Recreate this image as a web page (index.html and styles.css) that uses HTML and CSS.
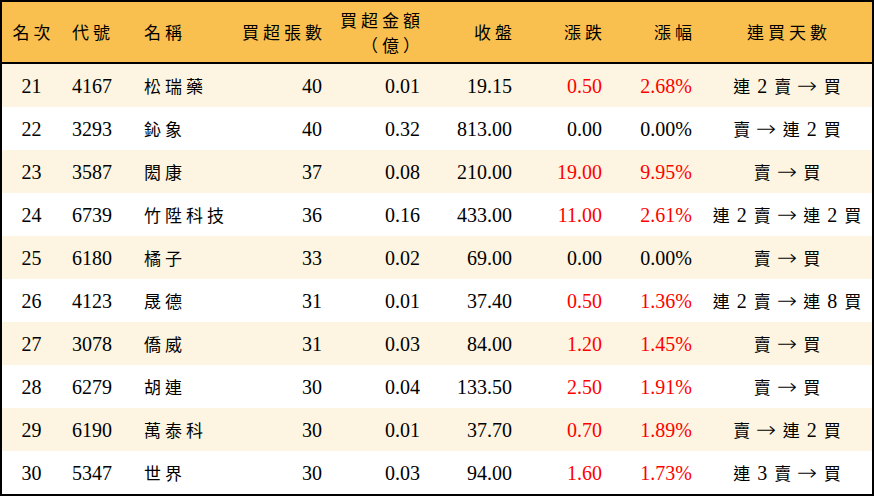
FILE: index.html
```html
<!DOCTYPE html>
<html lang="zh-Hant">
<head>
<meta charset="utf-8">
<link rel="stylesheet" href="styles.css">
</head>
<body>
<div class="board">
  <div class="row head">
    <div class="cell center"><span class="c">名次</span></div>
    <div class="cell left"><span class="c">代號</span></div>
    <div class="cell left2"><span class="c">名稱</span></div>
    <div class="cell right"><span class="c">買超張數</span></div>
    <div class="cell right two"><span class="c">買超金額</span><span class="c paren">（億）</span></div>
    <div class="cell right"><span class="c">收盤</span></div>
    <div class="cell right"><span class="c">漲跌</span></div>
    <div class="cell right"><span class="c">漲幅</span></div>
    <div class="cell center"><span class="c">連買天數</span></div>
  </div>

  <div class="row odd">
    <div class="cell center">21</div><div class="cell left">4167</div><div class="cell left2"><span class="c">松瑞藥</span></div>
    <div class="cell right">40</div><div class="cell right">0.01</div><div class="cell right">19.15</div>
    <div class="cell right up">0.50</div><div class="cell right up">2.68%</div>
    <div class="cell center days"><span class="k">連</span> 2 <span class="k">賣</span> <span class="ar">→</span> <span class="k">買</span></div>
  </div>
  <div class="row">
    <div class="cell center">22</div><div class="cell left">3293</div><div class="cell left2"><span class="c">鈊象</span></div>
    <div class="cell right">40</div><div class="cell right">0.32</div><div class="cell right">813.00</div>
    <div class="cell right">0.00</div><div class="cell right">0.00%</div>
    <div class="cell center days"><span class="k">賣</span> <span class="ar">→</span> <span class="k">連</span> 2 <span class="k">買</span></div>
  </div>
  <div class="row odd">
    <div class="cell center">23</div><div class="cell left">3587</div><div class="cell left2"><span class="c">閎康</span></div>
    <div class="cell right">37</div><div class="cell right">0.08</div><div class="cell right">210.00</div>
    <div class="cell right up">19.00</div><div class="cell right up">9.95%</div>
    <div class="cell center days"><span class="k">賣</span> <span class="ar">→</span> <span class="k">買</span></div>
  </div>
  <div class="row">
    <div class="cell center">24</div><div class="cell left">6739</div><div class="cell left2"><span class="c">竹陞科技</span></div>
    <div class="cell right">36</div><div class="cell right">0.16</div><div class="cell right">433.00</div>
    <div class="cell right up">11.00</div><div class="cell right up">2.61%</div>
    <div class="cell center days"><span class="k">連</span> 2 <span class="k">賣</span> <span class="ar">→</span> <span class="k">連</span> 2 <span class="k">買</span></div>
  </div>
  <div class="row odd">
    <div class="cell center">25</div><div class="cell left">6180</div><div class="cell left2"><span class="c">橘子</span></div>
    <div class="cell right">33</div><div class="cell right">0.02</div><div class="cell right">69.00</div>
    <div class="cell right">0.00</div><div class="cell right">0.00%</div>
    <div class="cell center days"><span class="k">賣</span> <span class="ar">→</span> <span class="k">買</span></div>
  </div>
  <div class="row">
    <div class="cell center">26</div><div class="cell left">4123</div><div class="cell left2"><span class="c">晟德</span></div>
    <div class="cell right">31</div><div class="cell right">0.01</div><div class="cell right">37.40</div>
    <div class="cell right up">0.50</div><div class="cell right up">1.36%</div>
    <div class="cell center days"><span class="k">連</span> 2 <span class="k">賣</span> <span class="ar">→</span> <span class="k">連</span> 8 <span class="k">買</span></div>
  </div>
  <div class="row odd">
    <div class="cell center">27</div><div class="cell left">3078</div><div class="cell left2"><span class="c">僑威</span></div>
    <div class="cell right">31</div><div class="cell right">0.03</div><div class="cell right">84.00</div>
    <div class="cell right up">1.20</div><div class="cell right up">1.45%</div>
    <div class="cell center days"><span class="k">賣</span> <span class="ar">→</span> <span class="k">買</span></div>
  </div>
  <div class="row">
    <div class="cell center">28</div><div class="cell left">6279</div><div class="cell left2"><span class="c">胡連</span></div>
    <div class="cell right">30</div><div class="cell right">0.04</div><div class="cell right">133.50</div>
    <div class="cell right up">2.50</div><div class="cell right up">1.91%</div>
    <div class="cell center days"><span class="k">賣</span> <span class="ar">→</span> <span class="k">買</span></div>
  </div>
  <div class="row odd">
    <div class="cell center">29</div><div class="cell left">6190</div><div class="cell left2"><span class="c">萬泰科</span></div>
    <div class="cell right">30</div><div class="cell right">0.01</div><div class="cell right">37.70</div>
    <div class="cell right up">0.70</div><div class="cell right up">1.89%</div>
    <div class="cell center days"><span class="k">賣</span> <span class="ar">→</span> <span class="k">連</span> 2 <span class="k">買</span></div>
  </div>
  <div class="row">
    <div class="cell center">30</div><div class="cell left">5347</div><div class="cell left2"><span class="c">世界</span></div>
    <div class="cell right">30</div><div class="cell right">0.03</div><div class="cell right">94.00</div>
    <div class="cell right up">1.60</div><div class="cell right up">1.73%</div>
    <div class="cell center days"><span class="k">連</span> 3 <span class="k">賣</span> <span class="ar">→</span> <span class="k">買</span></div>
  </div>
</div>
</body>
</html>
```

FILE: styles.css
```css
html, body {
  margin: 0;
  padding: 0;
  background: #ffffff;
}
.board {
  box-sizing: border-box;
  width: 874px;
  height: 496px;
  border: 2px solid #000;
  font-family: "Liberation Serif", "Noto Sans CJK TC", serif;
  font-size: 20px;
  color: #000;
  background: #fff;
}
.row {
  display: grid;
  grid-template-columns: 59px 73px 96px 102px 98px 92px 90px 90px 170px;
  height: 43px;
  align-items: center;
}
.row.odd {
  background: #fdf5e1;
}
.row.head {
  height: 60px;
  background: #f9c04f;
  border-bottom: 2px solid #000;
}
.cell {
  white-space: nowrap;
  line-height: 22px;
}
.center { text-align: center; }
.left { padding-left: 11px; }
.left2 { padding-left: 10px; }
.right { text-align: right; padding-right: 10px; }
.up { color: #ff0000; }
.c {
  font-family: "Noto Sans CJK TC", sans-serif;
  font-size: 17px;
  letter-spacing: 4px;
}
.head .right .c { margin-right: -4px; }
.head .center .c { margin-right: -4px; }
.two {
  display: flex;
  flex-direction: column;
  align-items: flex-end;
  line-height: 25px;
}
.two .paren { margin-right: 1px; }
.days {
  word-spacing: 2px;
}
.k {
  font-family: "Noto Sans CJK TC", sans-serif;
  font-size: 17px;
}
.ar {
  font-family: "DejaVu Sans", sans-serif;
  font-size: 22px;
  font-weight: 300;
  display: inline-block;
  transform: scaleX(1.1);
}
```
